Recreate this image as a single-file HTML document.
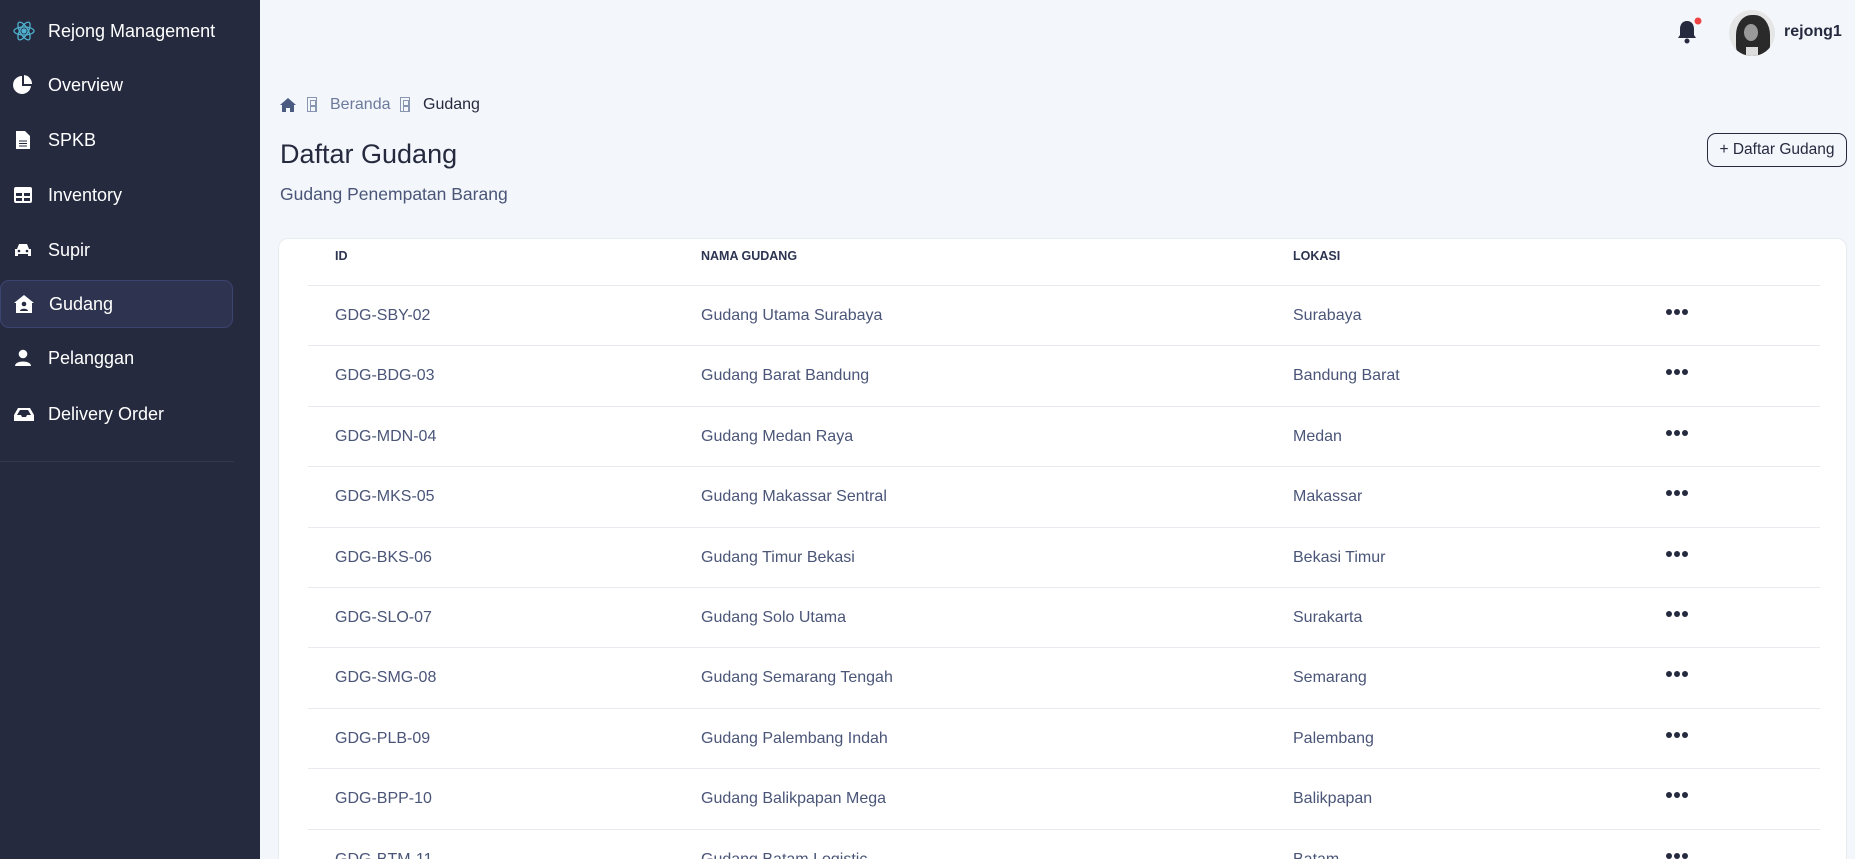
<!DOCTYPE html>
<html style="overflow:hidden;width:1855px;height:859px"><head><meta charset="utf-8"><style>
*{margin:0;padding:0;box-sizing:border-box}
body{width:1855px;height:859px;overflow:hidden;background:#f3f6fa;font-family:"Liberation Sans",sans-serif;position:relative}
.sb{position:absolute;left:0;top:0;width:260px;height:859px;background:#252a3f}
.it{position:absolute;left:0;width:233px;height:48px;color:#fff;font-size:18px;display:flex;align-items:center}
.it svg{position:absolute;left:12px}
.it span{position:absolute;left:48px}
.act{background:#2e3450;border:1px solid #3c4470;border-radius:9px}
.a{position:absolute}
.bx{position:absolute;width:10px;height:15px;border:1px solid #8896b0}
.bx:before{content:"";position:absolute;left:2px;top:2px;width:4px;height:4px;border:1px solid #8896b0}
.bx:after{content:"";position:absolute;left:2px;top:8px;width:4px;height:4px;border:1px solid #8896b0}
.card{position:absolute;left:278px;top:238px;width:1569px;height:621px;background:#fff;border-radius:10px 10px 0 0;border:1px solid #e8ebf0;border-bottom:none}
.row{position:absolute;left:308px;width:1512px;height:60.4px;border-bottom:1px solid #e8eaf0;font-size:16px;color:#4a5578;overflow:visible}
.row div{position:absolute;top:0;line-height:60px;white-space:nowrap}
.hd{font-size:12.5px;font-weight:bold;color:#2d3452}
.dots{position:absolute;left:1358px;top:23px;display:block;height:6px;line-height:6px}
.dots i{float:left;width:6px;height:6px;border-radius:3px;background:#252a3f;margin-right:2px}
</style></head><body>
<div class="sb">
<div class="it" style="top:7px"><svg width="24" height="24" viewBox="0 0 24 24" fill="none" stroke="#4fb3d0" stroke-width="1.3"><ellipse cx="12" cy="12" rx="10" ry="4"/><ellipse cx="12" cy="12" rx="10" ry="4" transform="rotate(60 12 12)"/><ellipse cx="12" cy="12" rx="10" ry="4" transform="rotate(120 12 12)"/><circle cx="12" cy="12" r="2" fill="#4fb3d0"/></svg><span>Rejong Management</span></div>
<div class="it" style="top:61px"><svg width="22" height="22" viewBox="0 0 22 22"><path d="M10 2A9 9 0 1 0 19 12H10Z" fill="#fff"/><path d="M12 1A9 9 0 0 1 20 10H12Z" fill="#fff"/></svg><span>Overview</span></div>
<div class="it" style="top:116px"><svg width="22" height="22" viewBox="0 0 22 22"><path d="M4 2h9l5 5v13H4Z" fill="#fff"/><path d="M7 12h8M7 14.5h8M7 17h8" stroke="#252a3f" stroke-width="1"/></svg><span>SPKB</span></div>
<div class="it" style="top:171px"><svg width="22" height="22" viewBox="0 0 22 22"><rect x="2" y="3" width="18" height="16" rx="2" fill="#fff"/><path d="M4 9h6v3H4zM12 9h6v3h-6zM4 14h6v3H4zM12 14h6v3h-6z" fill="#252a3f"/></svg><span>Inventory</span></div>
<div class="it" style="top:226px"><svg width="22" height="22" viewBox="0 0 22 22"><path d="M5 10l2-5h8l2 5h2v7h-3v-2H6v2H3v-7z" fill="#fff"/><circle cx="7" cy="12" r="1.3" fill="#252a3f"/><circle cx="15" cy="12" r="1.3" fill="#252a3f"/></svg><span>Supir</span></div>
<div class="it act" style="top:280px"><svg width="22" height="22" viewBox="0 0 22 22"><path d="M11 2l10 8h-2v10H3V10H1z" fill="#fff"/><circle cx="11" cy="11" r="2.3" fill="#252a3f"/><path d="M7 18c0-3 8-3 8 0z" fill="#252a3f"/></svg><span>Gudang</span></div>
<div class="it" style="top:334px"><svg width="22" height="22" viewBox="0 0 22 22"><circle cx="11" cy="7" r="4.3" fill="#fff"/><path d="M3 19c0-6 16-6 16 0z" fill="#fff"/></svg><span>Pelanggan</span></div>
<div class="it" style="top:390px"><svg width="24" height="22" viewBox="0 0 24 22"><path d="M2 12l4-7h12l4 7v6H2z" fill="#fff"/><path d="M5 12h4l1 2h4l1-2h4l-3-5H8z" fill="#252a3f"/></svg><span>Delivery Order</span></div>
<div class="a" style="left:0;top:461px;width:234px;height:1px;background:#323850"></div>
</div>

<svg class="a" style="left:1675px;top:17px" width="28" height="30" viewBox="0 0 28 30"><path d="M12 4c-5 0-7 4-7 8v6l-2 3h18l-2-3v-6c0-4-2-8-7-8z" fill="#252a3f"/><circle cx="12" cy="24" r="2.5" fill="#252a3f"/><circle cx="23" cy="4" r="3.5" fill="#f04444"/></svg>
<div class="a" style="left:1729px;top:10px;width:46px;height:46px;border-radius:50%;background:#e6e6e6;overflow:hidden">
<div class="a" style="left:7px;top:5px;width:34px;height:44px;border-radius:45% 45% 30% 30%;background:#2a2a2a"></div>
<div class="a" style="left:15px;top:14px;width:14px;height:17px;border-radius:50%;background:#999"></div>
<div class="a" style="left:17px;top:37px;width:12px;height:10px;background:#ddd"></div>
</div>
<div class="a" style="left:1784px;top:23px;font-size:16px;font-weight:bold;color:#252a3f">rejong1</div>

<svg class="a" style="left:279px;top:97px" width="18" height="16" viewBox="0 0 18 16"><path d="M9 1l8 7h-2v7h-4v-4H7v4H3V8H1z" fill="#4a5a80"/></svg>
<div class="bx" style="left:307px;top:97px"></div>
<div class="a" style="left:330px;top:96px;font-size:16px;color:#6c7a9c">Beranda</div>
<div class="bx" style="left:400px;top:97px"></div>
<div class="a" style="left:423px;top:96px;font-size:16px;color:#252a3f">Gudang</div>
<div class="a" style="left:280px;top:139px;font-size:27px;color:#252a3f">Daftar Gudang</div>
<div class="a" style="left:280px;top:184px;font-size:17.5px;color:#4a5578">Gudang Penempatan Barang</div>
<div class="a" style="left:1707px;top:133px;width:140px;height:34px;border:1.3px solid #252a3f;border-radius:9px;font-size:15.5px;color:#252a3f;text-align:center;line-height:32px">+ Daftar Gudang</div>

<div class="card"></div>
<div class="row hd" style="top:226px"><div style="left:27px">ID</div><div style="left:393px">NAMA GUDANG</div><div style="left:985px">LOKASI</div></div>
<div class="row" style="top:286px"><div style="left:27px">GDG-SBY-02</div><div style="left:393px">Gudang Utama Surabaya</div><div style="left:985px">Surabaya</div><span class="dots"><i></i><i></i><i></i></span></div>
<div class="row" style="top:346.4px"><div style="left:27px">GDG-BDG-03</div><div style="left:393px">Gudang Barat Bandung</div><div style="left:985px">Bandung Barat</div><span class="dots"><i></i><i></i><i></i></span></div>
<div class="row" style="top:406.8px"><div style="left:27px">GDG-MDN-04</div><div style="left:393px">Gudang Medan Raya</div><div style="left:985px">Medan</div><span class="dots"><i></i><i></i><i></i></span></div>
<div class="row" style="top:467.2px"><div style="left:27px">GDG-MKS-05</div><div style="left:393px">Gudang Makassar Sentral</div><div style="left:985px">Makassar</div><span class="dots"><i></i><i></i><i></i></span></div>
<div class="row" style="top:527.6px"><div style="left:27px">GDG-BKS-06</div><div style="left:393px">Gudang Timur Bekasi</div><div style="left:985px">Bekasi Timur</div><span class="dots"><i></i><i></i><i></i></span></div>
<div class="row" style="top:588px"><div style="left:27px">GDG-SLO-07</div><div style="left:393px">Gudang Solo Utama</div><div style="left:985px">Surakarta</div><span class="dots"><i></i><i></i><i></i></span></div>
<div class="row" style="top:648.4px"><div style="left:27px">GDG-SMG-08</div><div style="left:393px">Gudang Semarang Tengah</div><div style="left:985px">Semarang</div><span class="dots"><i></i><i></i><i></i></span></div>
<div class="row" style="top:708.8px"><div style="left:27px">GDG-PLB-09</div><div style="left:393px">Gudang Palembang Indah</div><div style="left:985px">Palembang</div><span class="dots"><i></i><i></i><i></i></span></div>
<div class="row" style="top:769.2px"><div style="left:27px">GDG-BPP-10</div><div style="left:393px">Gudang Balikpapan Mega</div><div style="left:985px">Balikpapan</div><span class="dots"><i></i><i></i><i></i></span></div>
<div class="row" style="top:829.6px;height:29.4px;border-bottom:none"><div style="left:27px">GDG-BTM-11</div><div style="left:393px">Gudang Batam Logistic</div><div style="left:985px">Batam</div><span class="dots"><i></i><i></i><i></i></span></div>
</body></html>
